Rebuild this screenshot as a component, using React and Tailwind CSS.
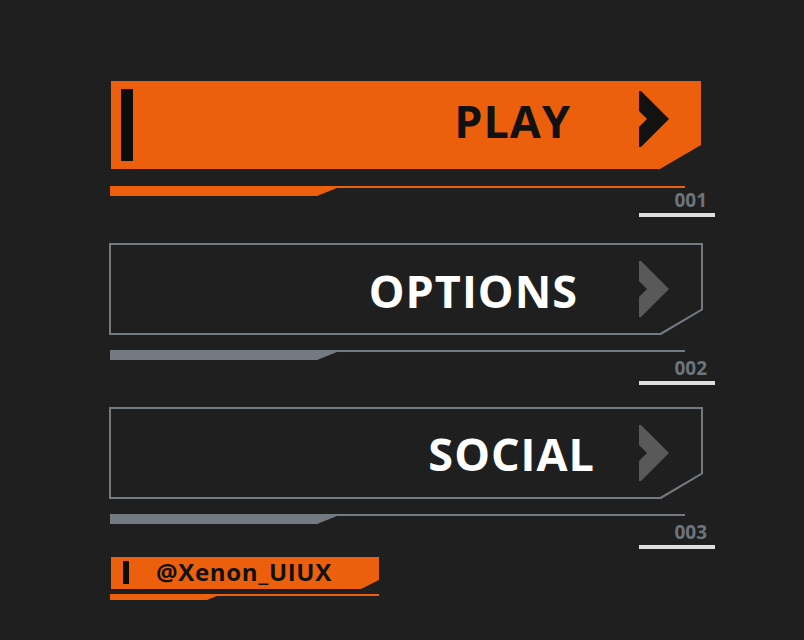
import React from 'react';

const Chevron = ({ className }) => (
    <svg viewBox="0 0 30 56" width="30" height="56" className={className}>
        <polygon points="0,0 2,0 30,28 2,56 0,56 0,36 8,28 0,20" fill="currentColor" />
    </svg>
);

const MenuItem = ({ label, num, active, textClass, chevClass, numClass, className }) => {
    const content = (
        <div className="flex h-full items-start">
            {active && <div className="ml-[10px] mt-[8px] h-[72px] w-[12px] bg-[#0d0d0d]" />}
            <div className="flex-1" />
            <span className={`text-[45px] leading-[45px] font-bold tracking-[1px] ${active ? 'text-[#111111]' : 'text-white'} ${textClass}`}>{label}</span>
            <Chevron className={`mr-[32px] ${active ? 'text-[#121212]' : 'text-[#595959]'} ${chevClass}`} />
        </div>
    );

    return (
        <div className={className}>
            {active ? (
                <div className="h-[92px] w-[594px] p-[2px]">
                    <div className="h-full bg-[#ec5f0c] [clip-path:polygon(0_0,100%_0,100%_64px,549px_100%,0_100%)]">{content}</div>
                </div>
            ) : (
                <div className="h-[92px] w-[594px] p-[2px] bg-[#737a81] [clip-path:polygon(0_0,100%_0,100%_67px,552px_100%,0_100%)]">
                    <div className="h-full bg-[#1f1f1f] [clip-path:polygon(0_0,100%_0,100%_64px,549px_100%,0_100%)]">{content}</div>
                </div>
            )}

            {/* underline with the thick tab on the left */}
            <div className={`ml-[1px] mt-[15px] h-[10px] w-[575px] [clip-path:polygon(0_0,100%_0,100%_2px,227px_2px,207px_100%,0_100%)] ${active ? 'bg-[#ec5f0c]' : 'bg-[#737a81]'}`} />

            <div className={`ml-[530px] flex w-[76px] flex-col items-end ${numClass}`}>
                <span className="pr-[8px] text-[19px] leading-[18px] font-bold text-[#6c747c]">{num}</span>
                <div className="mt-[4px] h-[4px] w-full bg-[#dedede]" />
            </div>
        </div>
    );
};

export default function App() {
    return (
        <div className="min-h-screen bg-[#1f1f1f] pl-[109px] pt-[79px] font-['Open_Sans',sans-serif]">
            <MenuItem label="PLAY" num="001" active textClass="mr-[68px] mt-[17px]" chevClass="mt-[10px]" numClass="-mt-[5px]" className="mb-[26px]" />
            <MenuItem label="OPTIONS" num="002" textClass="mr-[61px] mt-[23px]" chevClass="mt-[16px]" numClass="-mt-[1px]" className="mb-[22px]" />
            <MenuItem label="SOCIAL" num="003" textClass="mr-[44px] mt-[22px]" chevClass="mt-[16px]" numClass="-mt-[1px]" className="mb-[8px]" />

            <div className="ml-[2px] flex h-[32px] w-[268px] items-start bg-[#ec5f0c] [clip-path:polygon(0_0,100%_0,100%_23px,250px_100%,0_100%)]">
                <div className="ml-[12px] mt-[4px] h-[23px] w-[6px] bg-[#0d0d0d]" />
                <span className="ml-[27px] mt-[3px] text-[24px] leading-[24px] font-bold tracking-[0.7px] text-[#111111]">@Xenon_UIUX</span>
            </div>
            <div className="ml-[1px] mt-[5px] h-[6px] w-[269px] bg-[#ec5f0c] [clip-path:polygon(0_0,100%_0,100%_2px,107px_2px,97px_100%,0_100%)]" />
        </div>
    );
}
